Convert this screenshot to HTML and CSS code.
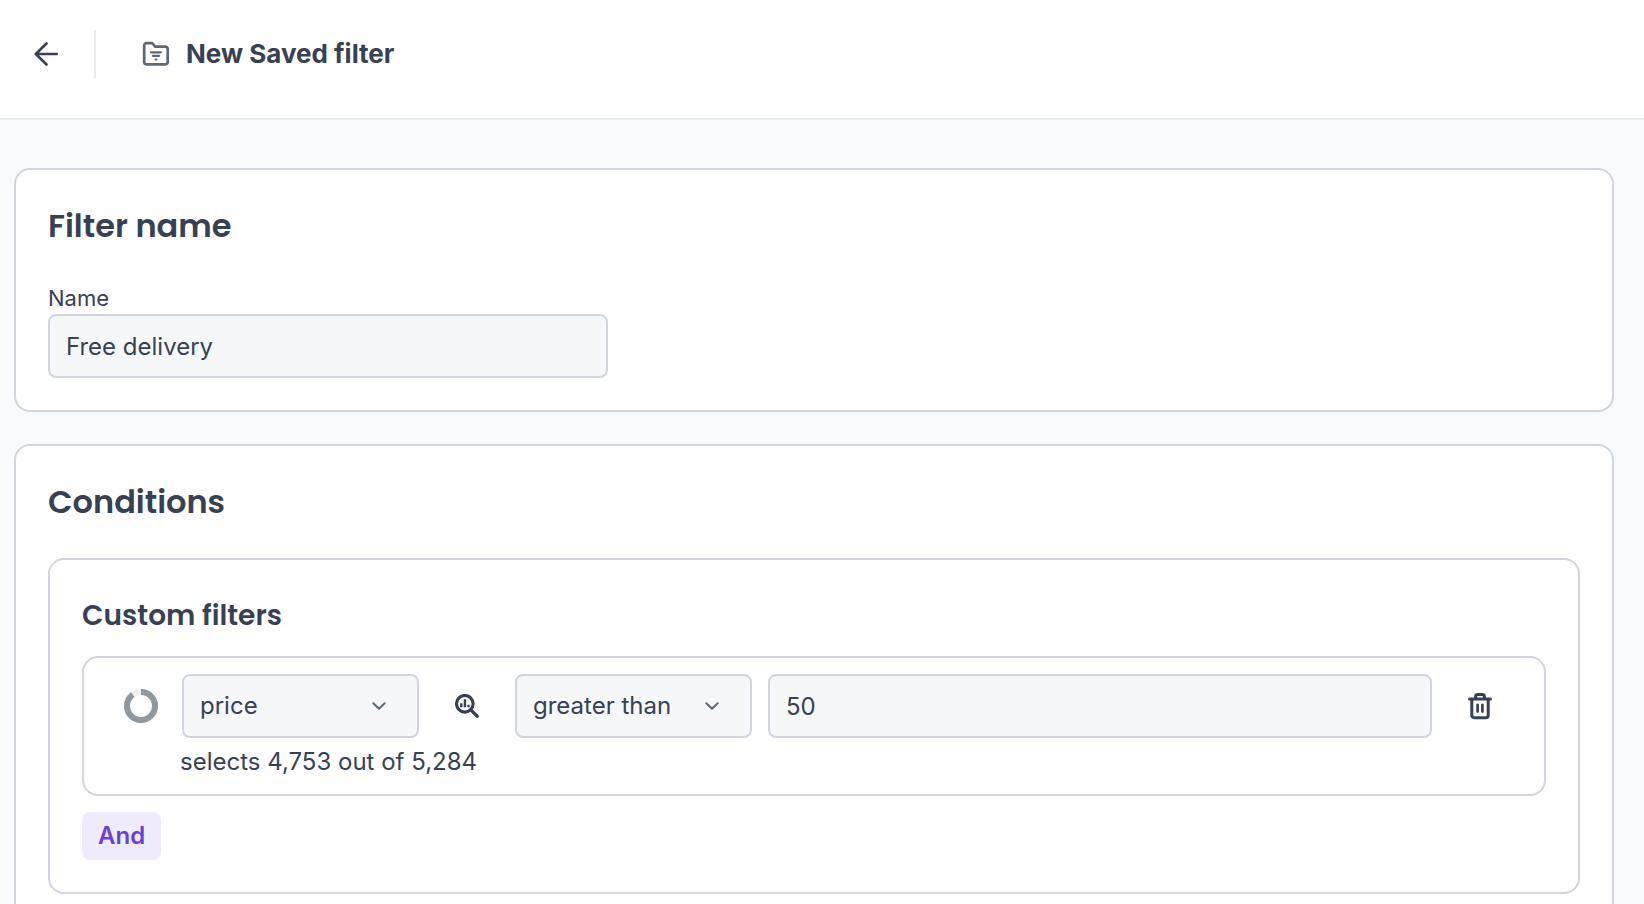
FILE: index.html
```html
<!DOCTYPE html>
<html lang="en">
<head>
    <meta charset="UTF-8">
    <meta name="viewport" content="width=device-width, initial-scale=1.0">
    <title>New Saved filter</title>
    <link rel="stylesheet" href="styles.css">
</head>
<body>
    <header class="header">
        <a class="back" href="#" aria-label="Back">
            <svg width="24" height="24" viewBox="0 0 24 24" fill="none" stroke="currentColor" stroke-width="2.6" stroke-linecap="round" stroke-linejoin="round">
                <path d="M12.500 1.500L1.800 12l10.700 10.500M1.800 12h20.900"/>
            </svg>
        </a>
        <div class="title">
            <svg class="title-icon" width="28" height="26" viewBox="0 0 28 26" fill="none" stroke="currentColor" stroke-width="2.7" stroke-linecap="round" stroke-linejoin="round">
                <path d="M2.200 4.500A2.300 2.300 0 0 1 4.500 2.200H9.400c.7 0 1.300.3 1.700.8L13.200 5.600h10.200A2.300 2.300 0 0 1 25.700 7.900v13.200a2.300 2.300 0 0 1-2.300 2.300H4.500A2.300 2.300 0 0 1 2.200 21.100z"/>
                <path d="M9 11.300h9.900M11 14.900h6M13.600 18.500h.8" stroke-width="2.200"/>
            </svg>
            <h1>New Saved filter</h1>
        </div>
    </header>

    <main class="content">
        <section class="card">
            <h2>Filter name</h2>
            <label for="name">Name</label>
            <input class="field name-field" type="text" id="name" value="Free delivery">
        </section>

        <section class="card">
            <h2>Conditions</h2>
            <div class="card">
                <h3>Custom filters</h3>
                <div class="condition">
                    <div class="condition-row">
                        <div class="ring">
                            <svg width="34" height="34" viewBox="0 0 34 34" fill="none" stroke-width="6">
                                <circle cx="17" cy="17" r="14" stroke="#eeeeee"/>
                                <circle cx="17" cy="17" r="14" stroke="#8f989f" pathLength="100" stroke-dasharray="90 10" transform="rotate(-90 17 17)"/>
                            </svg>
                        </div>
                        <div class="select">
                            <select class="field" aria-label="Attribute">
                                <option>price</option>
                            </select>
                            <svg class="chevron" width="14" height="8" viewBox="0 0 14 8"><path d="M1.3 1.2L7 6.7l5.7-5.5"/></svg>
                        </div>
                        <button class="icon-btn" type="button" aria-label="Show statistics">
                            <svg width="24" height="24" viewBox="0 0 24 24" fill="none" stroke="currentColor">
                                <circle cx="9.8" cy="9.800" r="8.300" stroke-width="3.1"/>
                                <path d="M16 16l6.300 6.300" stroke-width="3.200" stroke-linecap="round"/>
                                <path d="M6.300 9.300v4M9.900 5.300v8M13.500 10.800v2.500" stroke-width="2.400"/>
                            </svg>
                        </button>
                        <div class="select">
                            <select class="field" aria-label="Operator">
                                <option>greater than</option>
                            </select>
                            <svg class="chevron" width="14" height="8" viewBox="0 0 14 8"><path d="M1.3 1.2L7 6.7l5.7-5.5"/></svg>
                        </div>
                        <input class="field value-field" type="text" value="50" aria-label="Value">
                        <button class="icon-btn" type="button" aria-label="Delete condition">
                            <svg width="24" height="28" viewBox="0 0 24 28" fill="none" stroke="currentColor" stroke-width="3" stroke-linecap="round" stroke-linejoin="round">
                                <path d="M1.5 7h21M3.800 7v16.500a2.200 2.200 0 0 0 2.200 2.200h12a2.200 2.200 0 0 0 2.200-2.200V7M7.500 6.800V4.900a2.300 2.300 0 0 1 2.300-2.300h4.400A2.300 2.300 0 0 1 16.500 4.900v1.900"/>
                                <path d="M9.600 12.800v6.800M14.400 12.800v6.800" stroke-width="2.700"/>
                            </svg>
                        </button>
                    </div>
                    <p class="result">selects 4,753 out of 5,284</p>
                </div>
                <button class="and-btn" type="button">And</button>
            </div>
        </section>
    </main>
</body>
</html>
```
FILE: styles.css
```css
* {
    box-sizing: border-box;
}
body {
    margin: 0;
    background-color: #f9fafc;
    color: #384154;
    font-family: Inter, "Liberation Sans", sans-serif;
    font-size: 24px;
    line-height: 32px;
}
.header {
    display: flex;
    align-items: flex-start;
    height: 120px;
    padding-top: 30px;
    background-color: white;
    border-bottom: 2px solid #e8eaee;
}
.back {
    display: flex;
    align-items: center;
    width: 96px;
    height: 48px;
    padding-left: 34px;
    color: inherit;
    border-right: 2px solid #e8eaee;
}
.title {
    display: flex;
    align-items: center;
    gap: 16px;
    height: 48px;
    padding-left: 46px;
}
.title-icon {
    color: #5f6975;
}
h1, h2, h3 {
    margin: 0;
    font-weight: 600;
    line-height: 48px;
}
h1 {
    font-size: 26px;
    font-weight: 700;
}
h2, h3 {
    font-family: Poppins, Inter, sans-serif;
}
h2 {
    margin-bottom: 32px;
    font-size: 32px;
}
h3 {
    margin-bottom: 16px;
    font-size: 28px;
}
.content {
    padding: 48px 30px 48px 14px;
}
.card {
    padding: 32px;
    background-color: white;
    border: 2px solid #d1d5dd;
    border-radius: 16px;
}
.card + .card {
    margin-top: 32px;
}
label {
    display: block;
    font-size: 22px;
}
.field {
    display: block;
    width: 100%;
    height: 64px;
    padding: 0 16px;
    color: inherit;
    font: inherit;
    background-color: #f5f7f9;
    border: 2px solid #d1d5dd;
    border-radius: 8px;
    outline: none;
}
.name-field {
    max-width: 560px;
}
.condition {
    padding: 16px;
    border: 2px solid #d1d5dd;
    border-radius: 16px;
}
.condition-row {
    display: flex;
    align-items: center;
}
.ring {
    display: flex;
    justify-content: center;
    width: 82px;
}
.select {
    position: relative;
    width: 237px;
}
.select .field {
    appearance: none;
    padding-right: 80px;
}
.chevron {
    position: absolute;
    top: 28px;
    right: 33px;
    fill: none;
    stroke: #5f6975;
    stroke-width: 2;
    stroke-linecap: round;
    stroke-linejoin: round;
    pointer-events: none;
}
.value-field {
    flex: 1;
    width: auto;
    margin-left: 16px;
}
.icon-btn {
    display: flex;
    align-items: center;
    justify-content: center;
    width: 96px;
    height: 64px;
    padding: 0;
    color: inherit;
    background: none;
    border: none;
    cursor: pointer;
}
.result {
    margin: 8px 0 0 80px;
}
.and-btn {
    display: block;
    height: 48px;
    margin-top: 16px;
    padding: 0 16px;
    color: #6941d9;
    font: inherit;
    font-weight: 600;
    background-color: #f0ebfb;
    border: none;
    border-radius: 8px;
    cursor: pointer;
}
```
